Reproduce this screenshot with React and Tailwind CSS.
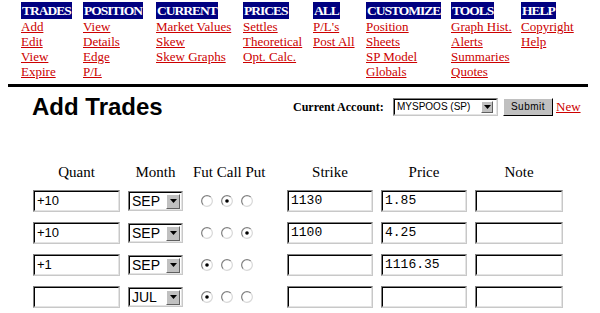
import React from 'react';

const menus = [
  { title: 'TRADES', w: 'w-[62px]', links: ['Add', 'Edit', 'View', 'Expire'] },
  { title: 'POSITION', w: 'w-[73px]', links: ['View', 'Details', 'Edge', 'P/L'] },
  { title: 'CURRENT', w: 'w-[87px]', links: ['Market Values', 'Skew', 'Skew Graphs'] },
  { title: 'PRICES', w: 'w-[70px]', links: ['Settles', 'Theoretical', 'Opt. Calc.'] },
  { title: 'ALL', w: 'w-[53px]', links: ["P/L's", 'Post All'] },
  { title: 'CUSTOMIZE', w: 'w-[85px]', links: ['Position', 'Sheets', 'SP Model', 'Globals'] },
  { title: 'TOOLS', w: 'w-[70px]', links: ['Graph Hist.', 'Alerts', 'Summaries', 'Quotes'] },
  { title: 'HELP', w: 'w-[60px]', links: ['Copyright', 'Help'] },
];

const rows = [
  { quant: '+10', month: 'SEP', type: 1, strike: '1130', price: '1.85' },
  { quant: '+10', month: 'SEP', type: 2, strike: '1100', price: '4.25' },
  { quant: '+1', month: 'SEP', type: 0, strike: '', price: '1116.35' },
  { quant: '', month: 'JUL', type: 0, strike: '', price: '' },
];

const serif = "font-['Liberation_Serif',serif]";
const sans = "font-['Liberation_Sans',Arial,sans-serif]";

function Inset({ className, children }) {
  return (
    <div className={`border border-t-[#808080] border-l-[#808080] border-b-[#c8c8c8] border-r-[#c8c8c8] ${className}`}>
      <div className="h-full border border-t-black border-l-black border-b-[#e4e4e4] border-r-[#e4e4e4] bg-white flex items-center overflow-hidden">
        {children}
      </div>
    </div>
  );
}

function ArrowBtn({ className }) {
  return (
    <div className={`bg-[#c0c0c0] border border-t-white border-l-white border-b-[#606060] border-r-[#606060] flex items-center justify-center ${className}`}>
      <svg width="7" height="4" viewBox="0 0 7 4">
        <path d="M0 0H7L3.5 4Z" fill="#000" />
      </svg>
    </div>
  );
}

function Select({ value, className, textClass, btnClass }) {
  return (
    <Inset className={className}>
      <span className={`flex-1 pl-[2px] text-black ${textClass}`}>{value}</span>
      <ArrowBtn className={btnClass} />
    </Inset>
  );
}

function Radio({ checked }) {
  return (
    <svg width="12" height="12" viewBox="0 0 12 12">
      <circle cx="6" cy="6" r="5" fill="#fff" />
      <path d="M2.2 9.8A5.3 5.3 0 0 1 9.8 2.2" stroke="#808080" strokeWidth="1.2" fill="none" />
      <path d="M9.8 2.2A5.3 5.3 0 0 1 2.2 9.8" stroke="#d8d8d8" strokeWidth="1.2" fill="none" />
      {checked && <circle cx="6" cy="6" r="1.8" fill="#000" />}
    </svg>
  );
}

function Field({ value, w, mono }) {
  return (
    <Inset className={`${w} h-[22px]`}>
      <span className={`pl-[2px] text-black whitespace-nowrap ${mono ? "font-['Liberation_Mono',monospace] text-[13px]" : `${sans} text-[13px]`}`}>
        {value}
      </span>
    </Inset>
  );
}

export default function App() {
  return (
    <div className={`w-[600px] h-[313px] bg-white overflow-hidden ${serif}`}>
      <div className="flex pl-[21px] pt-[2px]">
        {menus.map((m) => (
          <div key={m.title} className={`${m.w} shrink-0`}>
            <div className="w-fit bg-[#000080] text-white font-bold text-[13.5px] tracking-[-1px] h-[17px] leading-[18px] px-[1px] whitespace-nowrap">
              {m.title}
            </div>
            {m.links.map((l) => (
              <div key={l} className="text-[13px] leading-[15px] whitespace-nowrap">
                <a href="#" className="text-[#cc0000] underline">{l}</a>
              </div>
            ))}
          </div>
        ))}
      </div>

      <div className="ml-[8px] w-[580px] h-[3px] bg-black mt-[5px]" />

      <div className="flex items-start mt-[8px] pl-[32px]">
        <div className={`w-[261px] shrink-0 text-[24px] leading-[24px] font-bold text-black ${sans}`}>Add Trades</div>
        <div className="flex items-center mt-[2px]">
          <span className="w-[96px] text-[12px] font-bold text-black whitespace-nowrap">Current Account:</span>
          <Select
            value="MYSPOOS (SP)"
            className="ml-[4px] w-[105px] h-[18px]"
            textClass={`${sans} text-[10px]`}
            btnClass="w-[12px] h-[12px] mr-[3px]"
          />
          <button className={`ml-[5px] w-[50px] h-[18px] bg-[#c0c0c0] border border-t-white border-l-white border-b-black border-r-black text-[10px] tracking-[0.5px] text-black ${sans}`}>
            Submit
          </button>
          <a href="#" className="ml-[3px] text-[13px] text-[#cc0000] underline">New</a>
        </div>
      </div>

      <div className="flex pl-[33px] mt-[45px] text-[15px] leading-[17px] text-black">
        <div className="w-[87px] text-center">Quant</div>
        <div className="ml-[8px] w-[55px] text-center">Month</div>
        <div className="ml-[10px] w-[72px] whitespace-nowrap">Fut Call Put</div>
        <div className="ml-[22px] w-[86px] text-center">Strike</div>
        <div className="ml-[8px] w-[86px] text-center">Price</div>
        <div className="ml-[8px] w-[88px] text-center">Note</div>
      </div>

      <div className="flex flex-col gap-[10px] mt-[9px]">
        {rows.map((r, i) => (
          <div key={i} className="flex items-center pl-[33px] h-[22px]">
            <Field value={r.quant} w="w-[87px]" />
            <Select
              value={r.month}
              className="ml-[8px] w-[55px] h-[20px]"
              textClass={`${sans} text-[14px]`}
              btnClass="w-[14px] h-[15px] mr-[1px]"
            />
            <div className="flex gap-[8px] ml-[18px]">
              {[0, 1, 2].map((t) => (
                <Radio key={t} checked={r.type === t} />
              ))}
            </div>
            <div className="ml-[34px]">
              <Field value={r.strike} w="w-[86px]" mono />
            </div>
            <div className="ml-[8px]">
              <Field value={r.price} w="w-[86px]" mono />
            </div>
            <div className="ml-[8px]">
              <Field value="" w="w-[88px]" />
            </div>
          </div>
        ))}
      </div>
    </div>
  );
}
